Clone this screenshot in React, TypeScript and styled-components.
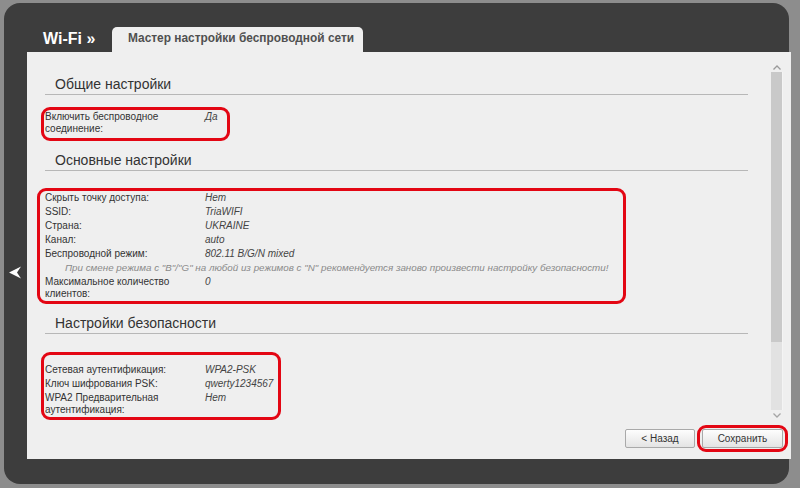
import React from 'react'
import styled, { createGlobalStyle } from 'styled-components'

const GlobalStyle = createGlobalStyle`
  html, body {
    margin: 0;
    padding: 0;
    background: #8d8d8d;
  }
  body {
    width: 800px;
    height: 488px;
    overflow: hidden;
    font-family: "Liberation Sans", Arial, sans-serif;
  }
`

type Field = { label: string; value?: string; note?: boolean }

const general: Field[] = [{ label: 'Включить беспроводное соединение:', value: 'Да' }]

const basic: Field[] = [
  { label: 'Скрыть точку доступа:', value: 'Нет' },
  { label: 'SSID:', value: 'TriaWIFI' },
  { label: 'Страна:', value: 'UKRAINE' },
  { label: 'Канал:', value: 'auto' },
  { label: 'Беспроводной режим:', value: '802.11 B/G/N mixed' },
  {
    label:
      'При смене режима с "B"/"G" на любой из режимов с "N" рекомендуется заново произвести настройку безопасности!',
    note: true,
  },
  { label: 'Максимальное количество клиентов:', value: '0' },
]

const security: Field[] = [
  { label: 'Сетевая аутентификация:', value: 'WPA2-PSK' },
  { label: 'Ключ шифрования PSK:', value: 'qwerty1234567' },
  { label: 'WPA2 Предварительная аутентификация:', value: 'Нет' },
]

const Fields = ({ items }: { items: Field[] }) => (
  <>
    {items.map((f) =>
      f.note ? (
        <Note key={f.label}>{f.label}</Note>
      ) : (
        <Row key={f.label}>
          <Label>{f.label}</Label>
          <Value>{f.value}</Value>
        </Row>
      )
    )}
  </>
)

export default function App() {
  return (
    <>
      <GlobalStyle />
      <Frame>
        <Header>
          <Title>Wi-Fi »</Title>
          <Tab>Мастер настройки беспроводной сети</Tab>
        </Header>
        <Body>
          <Side>
            <svg width='13' height='13' viewBox='0 0 13 13'>
              <polygon points='0,6.5 12,0.5 8,6.5 12,12.5' fill='#fff' />
            </svg>
          </Side>
          <Panel>
            <Main>
              <Content>
                <SectionTitle $mt={0}>Общие настройки</SectionTitle>
                <Highlight $mt={12} $ml={-4} $w={189} $pad='0 1px 2px'>
                  <Fields items={general} />
                </Highlight>

                <SectionTitle $mt={9}>Основные настройки</SectionTitle>
                <Highlight $mt={17} $ml={-8} $w={589} $pad='0 5px'>
                  <Fields items={basic} />
                </Highlight>

                <SectionTitle $mt={9}>Настройки безопасности</SectionTitle>
                <Highlight $mt={18} $ml={-4} $w={240} $pad='8px 1px 0'>
                  <Fields items={security} />
                </Highlight>
              </Content>
              <ScrollBar>
                <ScrollArrow>
                  <svg width='8' height='5' viewBox='0 0 8 5'>
                    <polyline points='0.5,4.5 4,1 7.5,4.5' fill='none' stroke='#9a9a9a' strokeWidth='1.3' />
                  </svg>
                </ScrollArrow>
                <Track>
                  <Thumb />
                </Track>
                <ScrollArrow>
                  <svg width='8' height='5' viewBox='0 0 8 5'>
                    <polyline points='0.5,0.5 4,4 7.5,0.5' fill='none' stroke='#a5a5a5' strokeWidth='1.3' />
                  </svg>
                </ScrollArrow>
              </ScrollBar>
            </Main>
            <Footer>
              <Button $w={70}>&lt; Назад</Button>
              <Highlight $mt={0} $ml={0} $w={91} $pad='1px 2px'>
                <Button $w={81}>Сохранить</Button>
              </Highlight>
            </Footer>
          </Panel>
        </Body>
      </Frame>
    </>
  )
}

const Frame = styled.div`
  margin: 3px 0 0 4px;
  width: 785px;
  height: 481px;
  border-radius: 16px;
  background: #3d3d3d;
  display: flex;
  flex-direction: column;
`

const Header = styled.div`
  height: 49px;
  flex-shrink: 0;
  display: flex;
  align-items: flex-end;
  padding-left: 39px;
`

const Title = styled.div`
  width: 69px;
  margin-bottom: 3px;
  color: #fff;
  font-size: 16px;
  font-weight: bold;
  line-height: 20px;
`

const Tab = styled.div`
  width: 251px;
  height: 25px;
  box-sizing: border-box;
  padding: 0 0 2px 16px;
  background: #efefef;
  border-radius: 5px 5px 0 0;
  color: #505050;
  font-size: 11.9px;
  font-weight: bold;
  line-height: 23px;
  white-space: nowrap;
`

const Body = styled.div`
  display: flex;
  height: 407px;
  flex-shrink: 0;
`

const Side = styled.div`
  width: 23px;
  flex-shrink: 0;
  box-sizing: border-box;
  padding: 213px 0 0 5px;
`

const Panel = styled.div`
  width: 764px;
  flex-shrink: 0;
  background: #efefef;
  display: flex;
  flex-direction: column;
`

const Main = styled.div`
  flex: 1;
  display: flex;
  min-height: 0;
`

const Content = styled.div`
  flex: 1;
  padding: 22px 0 0 18px;
  margin-right: 23px;
`

const SectionTitle = styled.h2<{ $mt: number }>`
  margin: ${(p) => p.$mt}px 0 0;
  padding-left: 10px;
  border-bottom: 1px solid #b7b7b7;
  color: #333;
  font-size: 14px;
  font-weight: normal;
  line-height: 20px;
`

const Highlight = styled.div<{ $mt: number; $ml: number; $w: number; $pad: string }>`
  box-sizing: border-box;
  width: ${(p) => p.$w}px;
  margin: ${(p) => p.$mt}px 0 0 ${(p) => p.$ml}px;
  padding: ${(p) => p.$pad};
  border: 3px solid #e30613;
  border-radius: 9px;
`

const Row = styled.div`
  display: grid;
  grid-template-columns: 160px 1fr;
  padding: 1px 0;
  font-size: 10px;
  line-height: 12px;
`

const Label = styled.div`
  padding-right: 10px;
  color: #333;
`

const Value = styled.div`
  color: #444;
  font-style: italic;
`

const Note = styled.div`
  padding: 1px 0 1px 20px;
  color: #8a8a8a;
  font-size: 9.8px;
  font-style: italic;
  line-height: 12px;
  white-space: nowrap;
`

const ScrollBar = styled.div`
  width: 12px;
  margin: 10px 8px 0 0;
  display: flex;
  flex-direction: column;
`

const ScrollArrow = styled.div`
  height: 10px;
  display: flex;
  align-items: center;
  justify-content: center;
`

const Track = styled.div`
  flex: 1;
  background: #e2e2e2;
  border-right: 1px solid #f4f4f4;
`

const Thumb = styled.div`
  height: 270px;
  background: #c9c9c9;
`

const Footer = styled.div`
  height: 39px;
  flex-shrink: 0;
  box-sizing: border-box;
  padding: 5px 3px 7px 0;
  display: flex;
  justify-content: flex-end;
  align-items: center;
  gap: 2px;
`

const Button = styled.button<{ $w: number }>`
  width: ${(p) => p.$w}px;
  height: 19px;
  padding: 0;
  border: 1px solid #a9a9a9;
  border-radius: 2px;
  background: linear-gradient(#fdfdfd, #e4e4e4);
  color: #333;
  font-family: "Liberation Sans", Arial, sans-serif;
  font-size: 10px;
  display: block;
`
